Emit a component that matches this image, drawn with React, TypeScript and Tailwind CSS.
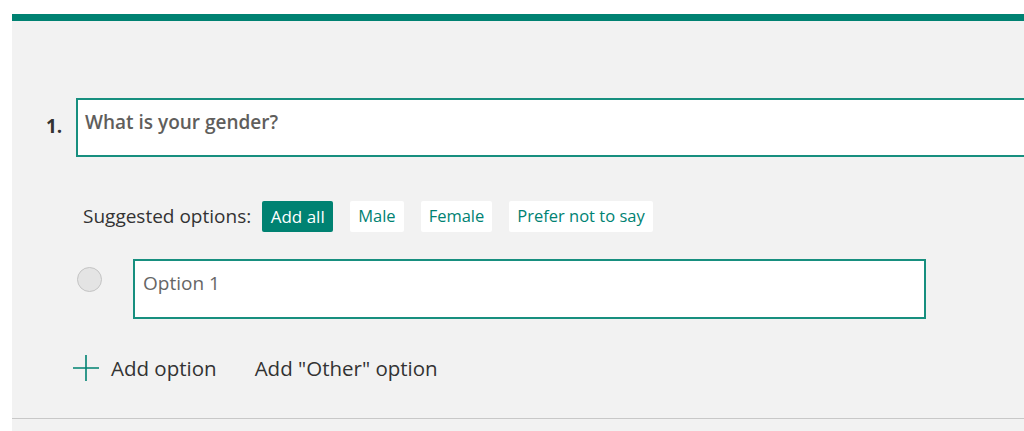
import React from 'react';

const chips = ['Male', 'Female', 'Prefer not to say'];

const App: React.FC = () => {
  return (
    <div className="w-[1024px] h-[431px] overflow-hidden bg-white pt-[14px] pl-[12px] font-['Open_Sans','Noto_Sans',sans-serif]">
      {/* top accent */}
      <div className="h-[7px] bg-[#008272]" />

      <div className="h-[410px] bg-[#f2f2f2] pt-[77px]">
        <div className="pl-[34px]">
          {/* question */}
          <div className="flex items-center">
            <span className="w-[30px] text-[19px] font-bold text-[#333333] -mt-[3px]">1.</span>
            <div className="h-[59px] flex-1 border-2 border-r-0 border-[#178f7f] bg-white pl-[7px] pt-[8px]">
              <span className="text-[19px] font-semibold text-[#605e5c]">What is your gender?</span>
            </div>
          </div>

          {/* suggested options */}
          <div className="mt-[44px] ml-[37px] flex items-center">
            <span className="mr-[11px] text-[19px] text-[#333333]">Suggested options:</span>
            <button className="h-[31px] w-[71px] rounded-[2px] bg-[#008272] text-[17px] text-white">Add all</button>
            {chips.map((c) => (
              <button
                key={c}
                className="ml-[17px] h-[31px] rounded-[2px] bg-white px-[8px] text-[16.5px] text-[#008272]"
              >
                {c}
              </button>
            ))}
          </div>

          {/* option row */}
          <div className="mt-[27px] ml-[31px] flex items-start">
            <div className="mt-[8px] h-[25px] w-[25px] rounded-full border border-[#c4c4c4] bg-[#e4e4e4]" />
            <div className="ml-[31px] flex h-[60px] w-[793px] items-center border-2 border-[#178f7f] bg-white pl-[8px] pb-[12px]">
              <span className="text-[19px] text-[#666666]">Option 1</span>
            </div>
          </div>

          {/* add option */}
          <div className="mt-[36px] ml-[27px] flex h-[26px] items-center">
            <svg width="26" height="26" viewBox="0 0 26 26" className="mr-[12px]">
              <path d="M13 0v26M0 13h26" stroke="#008272" strokeWidth="1.6" fill="none" />
            </svg>
            <span className="text-[20.5px] text-[#333333]">Add option</span>
            <span className="ml-[38px] text-[20.5px] text-[#333333]">Add "Other" option</span>
          </div>
        </div>

        <div className="mt-[37px] h-px bg-[#c8c8c8]" />
      </div>
    </div>
  );
};

export default App;
